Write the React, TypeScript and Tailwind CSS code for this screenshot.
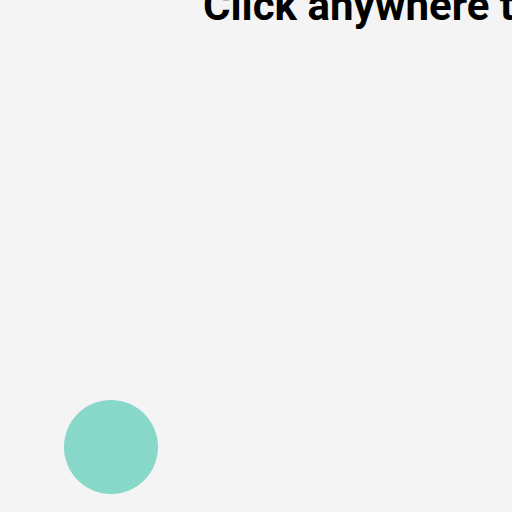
import React from "react";

export default function App() {
  const circles = [{ x: 111, y: 447, r: 47, color: "#88d8c9" }];

  return (
    <div className="relative h-[512px] w-[512px] overflow-hidden bg-[#f4f4f4] font-['Roboto',sans-serif]">
      <h1 className="-mt-[15px] whitespace-nowrap pl-[203px] text-[42px] font-bold leading-[42px] text-black">
        Click anywhere to add a circle
      </h1>
      {circles.map((c, i) => (
        <div
          key={i}
          className="absolute rounded-full"
          style={{ left: c.x - c.r, top: c.y - c.r, width: c.r * 2, height: c.r * 2, background: c.color }}
        />
      ))}
    </div>
  );
}
